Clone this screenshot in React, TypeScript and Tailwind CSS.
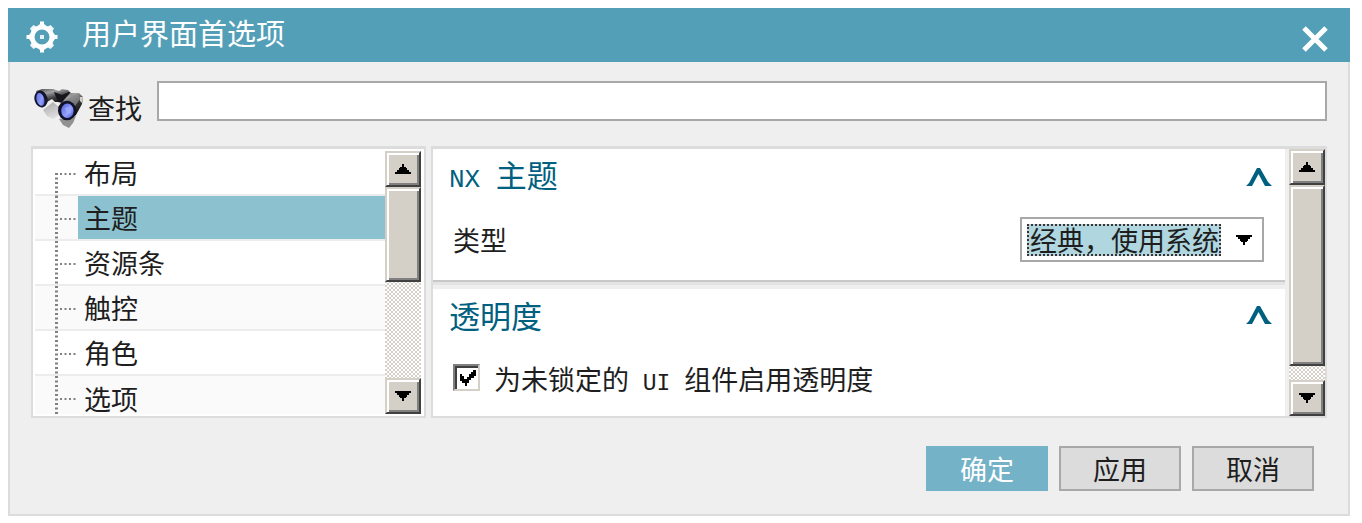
import React, { useState } from "react";
import clsx from "clsx";

const TREE_ITEMS = ["布局", "主题", "资源条", "触控", "角色", "选项"];

function GearIcon() {
  return (
    <svg width="32" height="32" viewBox="0 0 32 32" fill="none" aria-hidden="true">
      <circle cx="16" cy="16" r="9.8" stroke="#fff" strokeWidth="4.6" />
      <g fill="#fff">
        {[0, 90, 180, 270].map((a) => (
          <path key={a} d="M11 5.5 L14 3 V0.5 H18 V3 L21 5.5 Z" transform={`rotate(${a} 16 16)`} />
        ))}
        {[45, 135, 225, 315].map((a) => (
          <path key={a} d="M12.5 5.5 L13.5 1.5 H18.5 L19.5 5.5 Z" transform={`rotate(${a} 16 16)`} opacity="0.9" />
        ))}
        <rect x="14" y="14" width="4" height="4" opacity="0.85" />
      </g>
    </svg>
  );
}

function BinocularsIcon() {
  return (
    <svg width="50" height="42" viewBox="0 0 50 42" aria-hidden="true" className="shrink-0">
      <defs>
        <linearGradient id="barrel" x1="0" y1="0" x2="0.5" y2="1">
          <stop offset="0" stopColor="#4a4a4a" />
          <stop offset="0.3" stopColor="#a2a2a2" />
          <stop offset="0.6" stopColor="#3a3a3a" />
          <stop offset="1" stopColor="#0c0c0c" />
        </linearGradient>
        <linearGradient id="shade" x1="0" y1="0" x2="0.4" y2="1">
          <stop offset="0" stopColor="#a8a8a8" />
          <stop offset="1" stopColor="#dedede" />
        </linearGradient>
        <linearGradient id="lens" x1="0" y1="0" x2="1" y2="1">
          <stop offset="0" stopColor="#5767d8" />
          <stop offset="0.6" stopColor="#91a0ff" />
          <stop offset="1" stopColor="#4353c4" />
        </linearGradient>
      </defs>
      <path d="M9 23 L19 15 L27 22 L24 29 L19 32 L13 29 Z" fill="url(#shade)" />
      <path d="M25 32 L42 29 L39 36 L35 41 L29 38 Z" fill="#919191" />
      <path d="M2 4 L8 2 L19 2 L25 4 L28 2 L34 3 L37 6 L29 15 L21 15 L18 12 L13 15 L8 20 Z" fill="url(#barrel)" />
      <path d="M20 5 L28 8 L35 5 L40 9 L32 17 L24 15 Z" fill="#16161c" />
      <path d="M24 20 L36 6 L45 6 L49 10 L48 17 L42 28 L38 31 Z" fill="url(#barrel)" />
      <path d="M37 8 L44 8 L47 11 L41 19 L36 15 Z" fill="#8e8e8e" opacity="0.7" />
      <path d="M46 10 L49 10 L48 16 L46 14 Z" fill="#d2d2c8" />
      <ellipse cx="7" cy="12" rx="6.5" ry="8.5" fill="#15162b" transform="rotate(-15 7 12)" />
      <ellipse cx="6.4" cy="12.4" rx="3.8" ry="6.6" fill="url(#lens)" transform="rotate(-15 6.4 12.4)" />
      <ellipse cx="33" cy="23.5" rx="9" ry="9.8" fill="#11122a" />
      <ellipse cx="33.4" cy="23.8" rx="6.2" ry="7.2" fill="url(#lens)" />
      <path d="M31 21 L37 19 L37 26 L33 28 Z" fill="#9caaff" opacity="0.8" />
    </svg>
  );
}

function Branch({ first }: { first: boolean }) {
  return (
    <svg width="23" height="45" viewBox="0 0 23 45" stroke="#808080" aria-hidden="true" className="shrink-0">
      <path d={first ? "M1.5 22 V45" : "M1.5 0 V45"} strokeWidth="3" strokeDasharray="2 2.5" />
      <path d="M5 23 H22" strokeWidth="2" strokeDasharray="2 2.5" />
    </svg>
  );
}

function Arrow({ up }: { up?: boolean }) {
  return (
    <svg width="16" height="10" viewBox="0 0 16 10" fill="#000" shapeRendering="crispEdges" aria-hidden="true">
      <path
        d={
          up
            ? "M7 0H9V3H11V4H12V6H14V8H16V10H0V8H2V6H4V4H5V3H7Z"
            : "M0 0H16V2H14V4H12V6H11V7H9V10H7V7H5V6H4V4H2V2H0Z"
        }
      />
    </svg>
  );
}

const bevel =
  "w-full shrink-0 flex items-center justify-center bg-[#d4d0c8] border-2 border-t-[#d4d0c8] border-l-[#d4d0c8] border-r-[#404040] border-b-[#404040] shadow-[inset_2px_2px_0_#fff,inset_-2px_-2px_0_#808080]";

function ScrollBar({ thumb }: { thumb: string }) {
  return (
    <div className="w-9 shrink-0 flex flex-col bg-white bg-[conic-gradient(#d4d0c8_25%,#fff_0_50%,#d4d0c8_0_75%,#fff_0)] bg-[length:4px_4px]">
      <button aria-label="向上滚动" className={clsx(bevel, "h-9")}>
        <Arrow up />
      </button>
      <div className={clsx(bevel, thumb)} />
      <button aria-label="向下滚动" className={clsx(bevel, "h-9 mt-auto")}>
        <Arrow />
      </button>
    </div>
  );
}

function GroupHeader({ children, onToggle }: { children: React.ReactNode; onToggle: () => void }) {
  return (
    <div className="h-9 pl-4 pr-[13px] flex items-center justify-between">
      <h2 className="text-[31px] leading-9 text-[#00607f] whitespace-pre">{children}</h2>
      <button aria-label="折叠" onClick={onToggle}>
        <svg width="26" height="22" viewBox="0 0 26 22" fill="#00607f" aria-hidden="true">
          <path d="M0 20 L3 17 L11 2 H14 L22 16 L26 20 H19 L12.5 8 L6 20 Z" />
        </svg>
      </button>
    </div>
  );
}

export default function App() {
  const [selected, setSelected] = useState("主题");
  const [query, setQuery] = useState("");
  const [transparent, setTransparent] = useState(true);
  const [showTheme, setShowTheme] = useState(true);
  const [showAlpha, setShowAlpha] = useState(true);

  return (
    <div className="min-h-screen bg-white pt-2 pl-2 pr-3 font-['Noto_Sans_CJK_SC',sans-serif] text-[27px] leading-9 text-[#1e1e1e]">
      <header className="h-[54px] bg-[#549fb8] pt-1 pl-[18px] pr-[22px] flex items-center text-white">
        <GearIcon />
        <h1 className="ml-6 pb-2.5 text-[29px] leading-9">用户界面首选项</h1>
        <button aria-label="关闭" className="ml-auto pt-1">
          <svg width="26" height="26" viewBox="0 0 26 26" stroke="#fff" strokeWidth="5" aria-hidden="true">
            <path d="M2 2 L24 24 M24 2 L2 24" />
          </svg>
        </button>
      </header>

      <main className="bg-[#efefef] border-2 border-t-0 border-[#dcdcdc] pt-[19px] pl-[21px] pr-[21px] pb-[23px]">
        <div className="flex items-start">
          <label htmlFor="search" className="h-10 flex items-center gap-1 ml-[3px] mr-[15px] pt-3.5 whitespace-nowrap">
            <BinocularsIcon />
            查找
          </label>
          <input
            id="search"
            value={query}
            onChange={(e) => setQuery(e.target.value)}
            className="h-10 flex-1 min-w-0 px-2 bg-white border-2 border-[#a8a8a8] outline-none"
          />
        </div>

        <div className="mt-[25px] flex gap-[5px] h-[272px]">
          {/* Category tree */}
          <nav className="w-[395px] shrink-0 flex bg-white border-2 border-t-3 border-[#dcdcdc] p-0.5 pr-[3px]">
            <ul className="flex-1 flex flex-col overflow-hidden">
              {TREE_ITEMS.map((item, i) => (
                <li
                  key={item}
                  className={clsx(
                    "pl-5 flex",
                    i < TREE_ITEMS.length - 1 ? "h-[45px] shrink-0 border-b-2 border-[#ececec]" : "flex-1 min-h-0 pt-2",
                    i % 2 && "bg-[#fafafa]"
                  )}
                >
                  <span className={clsx("shrink-0", i === TREE_ITEMS.length - 1 && "-mt-2")}>
                    <Branch first={i === 0} />
                  </span>
                  <button
                    onClick={() => setSelected(item)}
                    className={clsx("flex-1 pl-1.5 text-left leading-7", selected === item && "bg-[#8cc2d0]")}
                  >
                    {item}
                  </button>
                </li>
              ))}
            </ul>
            <ScrollBar thumb="h-[95px]" />
          </nav>

          {/* Settings for the selected category */}
          <section className="flex-1 min-w-0 flex border-2 border-t-3 border-[#dcdcdc]">
            <div className="flex-1 mr-1 flex flex-col overflow-hidden">
              <div className="bg-white pt-2.5 pb-[18px]">
                <GroupHeader onToggle={() => setShowTheme(!showTheme)}>
                  <span className="font-['Liberation_Mono',monospace] text-[26px]">NX </span>主题
                </GroupHeader>
                {showTheme && (
                  <div className="mt-[22px] pl-5 pr-[21px] flex items-center justify-between">
                    <label htmlFor="theme-type">类型</label>
                    <div className="h-[45px] pl-[5px] pr-2.5 flex items-center gap-[15px] bg-white border-2 border-[#a8a8a8]">
                      <select
                        id="theme-type"
                        className="appearance-none w-[194px] h-8 pl-px leading-7 bg-[#b0d7e0] border-2 border-dotted border-[#403030] overflow-hidden outline-none"
                      >
                        <option>经典，使用系统</option>
                      </select>
                      <Arrow />
                    </div>
                  </div>
                )}
              </div>
              <div className="h-[9px] shrink-0 border-t-2 border-[#c8c8c8]">
                <div className="h-[3px] bg-[#e4e4e4]" />
              </div>
              <div className="bg-white pt-2 flex-1">
                <GroupHeader onToggle={() => setShowAlpha(!showAlpha)}>透明度</GroupHeader>
                {showAlpha && (
                  <label className="mt-7 pl-5 flex items-center gap-3.5 whitespace-pre">
                    <span className="relative flex -mt-2">
                      <input
                        type="checkbox"
                        checked={transparent}
                        onChange={(e) => setTransparent(e.target.checked)}
                        className="appearance-none size-[27px] bg-white border-2 border-t-[#808080] border-l-[#808080] border-r-[#d4d0c8] border-b-[#d4d0c8] shadow-[inset_2px_2px_0_#404040]"
                      />
                      {transparent && (
                        <svg
                          width="17"
                          height="17"
                          viewBox="0 0 17 17"
                          shapeRendering="crispEdges"
                          aria-hidden="true"
                          className="absolute left-[7px] top-[6px] pointer-events-none"
                        >
                          <path d="M0 4H2V6H4V9H7V7H9V4H11V2H13V0H16V6H14V8H11V10H9V13H7V16H5V13H2V11H0Z" />
                        </svg>
                      )}
                    </span>
                    <span>
                      为未锁定的
                      <span className="font-['Liberation_Mono',monospace] text-[23px]"> UI </span>
                      组件启用透明度
                    </span>
                  </label>
                )}
              </div>
            </div>
            <ScrollBar thumb="h-[181px]" />
          </section>
        </div>

        <footer className="mt-7 pr-[13px] flex justify-end gap-[11px]">
          <button className="w-[122px] h-[45px] bg-[#74b2c7] text-white">确定</button>
          <button className="w-[122px] h-[45px] bg-[#dcdcdc] border-2 border-[#a8a8a8]">应用</button>
          <button className="w-[122px] h-[45px] bg-[#dcdcdc] border-2 border-[#a8a8a8]">取消</button>
        </footer>
      </main>
    </div>
  );
}
